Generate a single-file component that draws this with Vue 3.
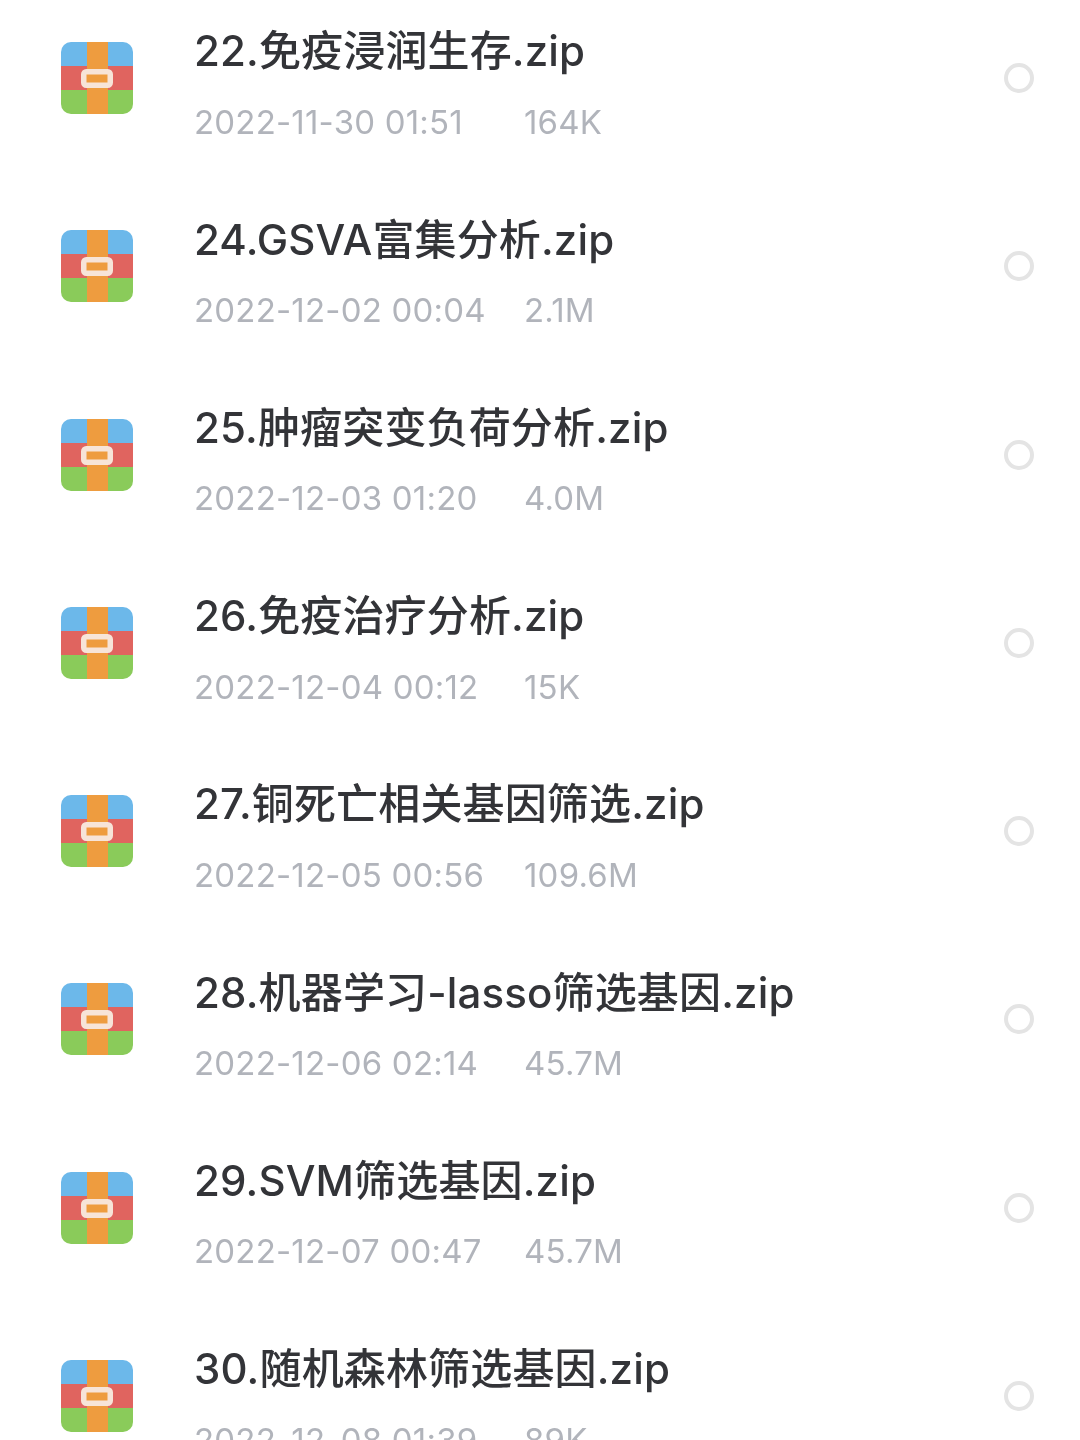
<script setup>
const files = [
  { id: 1, name: '22.免疫浸润生存.zip', date: '2022-11-30 01:51', size: '164K' },
  { id: 2, name: '24.GSVA富集分析.zip', date: '2022-12-02 00:04', size: '2.1M' },
  { id: 3, name: '25.肿瘤突变负荷分析.zip', date: '2022-12-03 01:20', size: '4.0M' },
  { id: 4, name: '26.免疫治疗分析.zip', date: '2022-12-04 00:12', size: '15K' },
  { id: 5, name: '27.铜死亡相关基因筛选.zip', date: '2022-12-05 00:56', size: '109.6M' },
  { id: 6, name: '28.机器学习-lasso筛选基因.zip', date: '2022-12-06 02:14', size: '45.7M' },
  { id: 7, name: '29.SVM筛选基因.zip', date: '2022-12-07 00:47', size: '45.7M' },
  { id: 8, name: '30.随机森林筛选基因.zip', date: '2022-12-08 01:39', size: '89K' },
]
</script>

<template>
  <div class="page">
    <div class="file-list">
      <div v-for="file in files" :key="file.id" class="file-row">
        <svg class="zip-icon" viewBox="0 0 72 72" width="72" height="72">
          <defs>
            <clipPath :id="'clip' + file.id">
              <rect width="72" height="72" rx="10" />
            </clipPath>
          </defs>
          <g :clip-path="'url(#clip' + file.id + ')'">
            <rect width="72" height="24" fill="#6cb8ea" />
            <rect y="24" width="72" height="24" fill="#e0645f" />
            <rect y="48" width="72" height="24" fill="#8acb5a" />
            <rect x="26" width="21" height="72" fill="#ee9c3f" />
          </g>
          <rect x="22.75" y="29.75" width="26.5" height="13.5" rx="2.5" fill="#ee9c3f" stroke="#f7e4d8" stroke-width="5.5" />
        </svg>
        <div class="file-info">
          <div class="file-name">{{ file.name }}</div>
          <div class="file-meta">
            <span class="file-date">{{ file.date }}</span>
            <span>{{ file.size }}</span>
          </div>
        </div>
        <div class="radio"></div>
      </div>
    </div>
  </div>
</template>

<style scoped>
.page {
  width: 1080px;
  height: 1440px;
  overflow: hidden;
  background: #fff;
  font-family: Inter, "Noto Sans CJK SC", sans-serif;
  filter: blur(0.4px);
}

.file-list {
  margin-top: -16px;
}

.file-row {
  height: 188.25px;
  display: flex;
  align-items: center;
  padding: 0 46px 0 61px;
}

.zip-icon {
  flex: none;
}

.file-info {
  flex: 1;
  margin-left: 61px;
  padding-top: 12px;
}

.file-name {
  font-size: 42px;
  line-height: 50px;
  font-weight: 500;
  letter-spacing: 0.15px;
  color: #333438;
  white-space: nowrap;
}

.file-meta {
  margin-top: 25.5px;
  display: flex;
  font-size: 33px;
  line-height: 40px;
  letter-spacing: 0.2px;
  color: #b1b4bb;
}

.file-date {
  width: 330px;
}

.radio {
  flex: none;
  width: 30px;
  height: 30px;
  box-sizing: border-box;
  border: 4px solid #e4e4e4;
  border-radius: 50%;
}
</style>

<style>
body {
  background: #fff;
}
</style>
